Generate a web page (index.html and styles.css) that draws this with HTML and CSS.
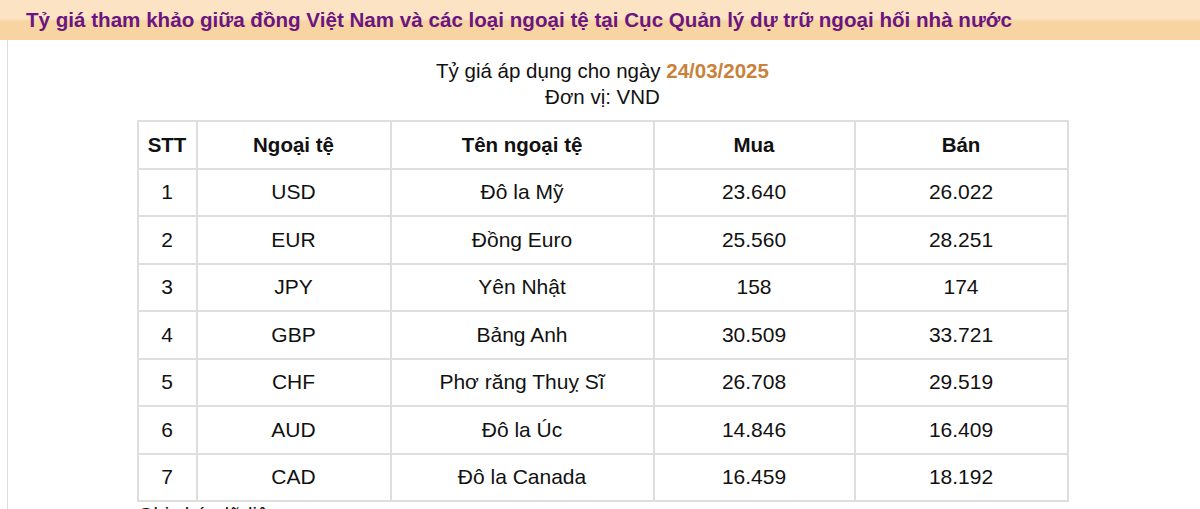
FILE: index.html
```html
<!DOCTYPE html>
<html lang="vi">
<head>
<meta charset="utf-8">
<link rel="stylesheet" href="styles.css">
</head>
<body>
<div class="header"><h1 class="title">Tỷ giá tham khảo giữa đồng Việt Nam và các loại ngoại tệ tại Cục Quản lý dự trữ ngoại hối nhà nước</h1></div>
<div class="content">
  <div class="meta">
    <div>Tỷ giá áp dụng cho ngày <b class="date">24/03/2025</b></div>
    <div>Đơn vị: VND</div>
  </div>
  <table class="rates">
    <colgroup>
      <col class="c1"><col class="c2"><col class="c3"><col class="c4"><col class="c5">
    </colgroup>
    <thead>
      <tr><th>STT</th><th>Ngoại tệ</th><th>Tên ngoại tệ</th><th>Mua</th><th>Bán</th></tr>
    </thead>
    <tbody>
      <tr><td>1</td><td>USD</td><td>Đô la Mỹ</td><td>23.640</td><td>26.022</td></tr>
      <tr><td>2</td><td>EUR</td><td>Đồng Euro</td><td>25.560</td><td>28.251</td></tr>
      <tr><td>3</td><td>JPY</td><td>Yên Nhật</td><td>158</td><td>174</td></tr>
      <tr><td>4</td><td>GBP</td><td>Bảng Anh</td><td>30.509</td><td>33.721</td></tr>
      <tr><td>5</td><td>CHF</td><td>Phơ răng Thuỵ Sĩ</td><td>26.708</td><td>29.519</td></tr>
      <tr><td>6</td><td>AUD</td><td>Đô la Úc</td><td>14.846</td><td>16.409</td></tr>
      <tr><td>7</td><td>CAD</td><td>Đô la Canada</td><td>16.459</td><td>18.192</td></tr>
    </tbody>
  </table>
  <p class="note">Ghi chú: dữ liệu</p>
</div>
</body>
</html>
```
FILE: styles.css
```css
html, body {
  margin: 0;
  padding: 0;
  background: #fff;
  font-family: "Liberation Sans", Arial, sans-serif;
  color: #111;
}
.header {
  height: 40px;
  background: linear-gradient(to bottom, #fbe3c3 0%, #fbe3c3 47%, #f7d5a2 53%, #f7d3a0 100%);
  box-sizing: border-box;
  padding-left: 26px;
  display: flex;
  align-items: center;
}
.title {
  margin: 0;
  font-size: 20.6px;
  font-weight: bold;
  color: #6b1580;
  white-space: nowrap;
}
.content {
  margin-left: 7px;
  margin-right: 3px;
  border-left: 1px solid #dcdcdc;
  padding-top: 18px;
  height: 469px;
  box-sizing: border-box;
  overflow: hidden;
}
.meta {
  text-align: center;
  font-size: 20.5px;
  line-height: 26px;
  margin-bottom: 10px;
}
.date {
  color: #c8823a;
}
.rates {
  margin: 0 auto;
  border-collapse: collapse;
  width: 930px;
  table-layout: fixed;
  font-size: 21px;
}
.c1 { width: 59px; }
.c2 { width: 194px; }
.c3 { width: 263px; }
.c4 { width: 201px; }
.c5 { width: 213px; }
.rates th, .rates td {
  border: 2px solid #dedede;
  text-align: center;
  height: 45.5px;
  padding: 0;
}
.rates th {
  font-weight: bold;
  font-size: 20.5px;
}
.note {
  margin: 2px 0 0 130px;
  font-size: 20px;
}
```
